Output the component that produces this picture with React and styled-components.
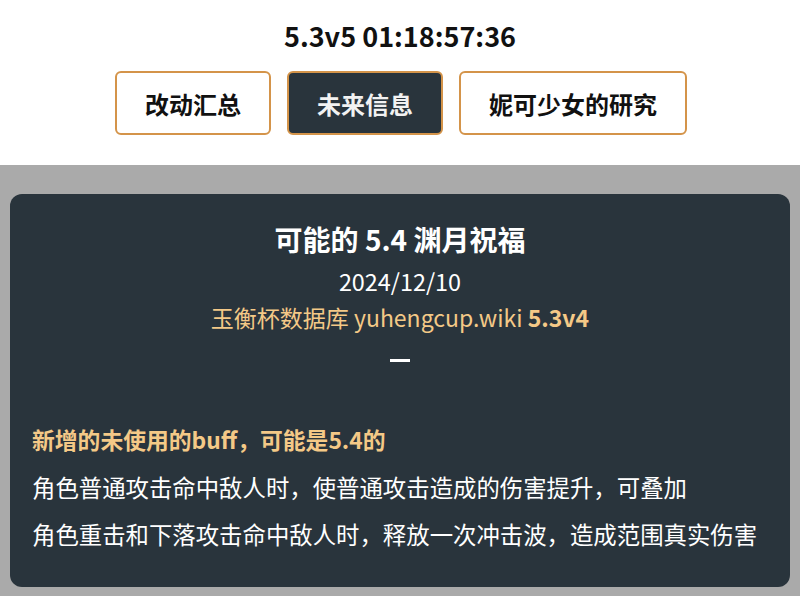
import React from 'react'
import styled, { createGlobalStyle } from 'styled-components'

const Global = createGlobalStyle`
  html, body {
    margin: 0;
    padding: 0;
    background: #aaaaaa;
    font-family: "Noto Sans CJK SC", "Noto Sans", sans-serif;
  }
`

const Header = styled.header`
  background: #ffffff;
  height: 165px;
  display: flex;
  flex-direction: column;
  align-items: center;
  box-sizing: border-box;
  padding-top: 18px;
`

const Clock = styled.h1`
  margin: 0;
  font-size: 27px;
  line-height: 36px;
  font-weight: bold;
  color: #111;
`

const Tabs = styled.nav`
  display: flex;
  gap: 16px;
  margin-top: 17px;
  padding-left: 2px;
`

const Tab = styled.button`
  height: 64px;
  padding: 0 28px;
  border: 2px solid #d4944a;
  border-radius: 6px;
  background: ${p => (p.$active ? '#29343c' : '#ffffff')};
  color: ${p => (p.$active ? '#f2f2f2' : '#111')};
  font-family: inherit;
  font-size: 24px;
  font-weight: bold;
  cursor: pointer;
`

const Main = styled.main`
  padding: 29px 10px 0;
`

const Card = styled.section`
  background: #29343c;
  border-radius: 12px;
  height: 393px;
  box-sizing: border-box;
  padding: 25px 22px 0;
  color: #ffffff;
`

const Title = styled.h2`
  margin: 0;
  text-align: center;
  font-size: 28px;
  line-height: 40px;
  font-weight: bold;
`

const Date = styled.div`
  text-align: center;
  font-size: 23.4px;
  line-height: 36px;
  margin-top: 4px;
`

const Source = styled.div`
  text-align: center;
  font-size: 23px;
  line-height: 36px;
  color: #f4c987;
  b {
    font-weight: bold;
  }
`

const Dash = styled.div`
  width: 20px;
  height: 3px;
  background: #ffffff;
  margin: 24px auto 0;
`

const Notes = styled.div`
  margin-top: 60px;
  display: flex;
  flex-direction: column;
  gap: 11px;
`

const Line = styled.p`
  margin: 0;
  font-size: ${p => (p.$accent ? 22.8 : 23.4)}px;
  line-height: 36px;
  color: ${p => (p.$accent ? '#f4c987' : '#ffffff')};
  font-weight: ${p => (p.$accent ? 'bold' : 'normal')};
`

export default function App() {
  return (
    <>
      <Global />
      <Header>
        <Clock>5.3v5 01:18:57:36</Clock>
        <Tabs>
          <Tab>改动汇总</Tab>
          <Tab $active>未来信息</Tab>
          <Tab>妮可少女的研究</Tab>
        </Tabs>
      </Header>
      <Main>
        <Card>
          <Title>可能的 5.4 渊月祝福</Title>
          <Date>2024/12/10</Date>
          <Source>
            玉衡杯数据库 yuhengcup.wiki <b>5.3v4</b>
          </Source>
          <Dash />
          <Notes>
            <Line $accent>新增的未使用的buff，可能是5.4的</Line>
            <Line>角色普通攻击命中敌人时，使普通攻击造成的伤害提升，可叠加</Line>
            <Line>角色重击和下落攻击命中敌人时，释放一次冲击波，造成范围真实伤害</Line>
          </Notes>
        </Card>
      </Main>
    </>
  )
}
